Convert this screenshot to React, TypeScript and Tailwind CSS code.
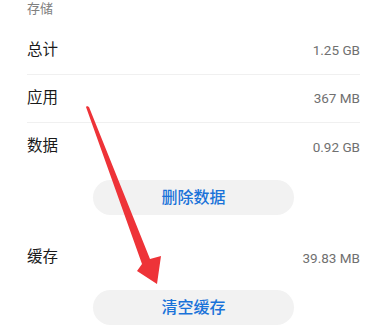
const rows = [
  { label: '总计', value: '1.25 GB' },
  { label: '应用', value: '367 MB' },
  { label: '数据', value: '0.92 GB' },
]

function Arrow() {
  return (
    <svg className="absolute left-0 top-0 pointer-events-none" width="384" height="335" viewBox="0 0 384 335">
      <polygon
        points="87,106 89,107 150,259 161,256 157,284 137,271 142,264 86,107"
        fill="#ee3338"
      />
    </svg>
  )
}

export default function App() {
  return (
    <div className="relative w-[384px] h-[335px] overflow-hidden bg-white font-['Roboto','Noto_Sans_CJK_SC',sans-serif]">
      <div className="pl-[27px] pr-[24px]">
        <div className="h-[27px] text-[13px] leading-[18px] text-[#808080]">存储</div>
        {rows.map((r, i) => (
          <div
            key={r.label}
            className={`flex items-center justify-between h-[48px] ${i < rows.length - 1 ? 'border-b border-[#f0f0f0]' : ''}`}
          >
            <span className="text-[15.5px] text-[#1a1a1a]">{r.label}</span>
            <span className="text-[13.5px] text-[#707070]">{r.value}</span>
          </div>
        ))}
        <button className="mt-[9px] mx-auto flex items-center justify-center w-[201px] h-[35px] rounded-full bg-[#f2f2f2] text-[16px] font-medium text-[#1a73d9]">
          删除数据
        </button>
        <div className="mt-[19px] flex items-center justify-between h-[48px]">
          <span className="text-[15.5px] text-[#1a1a1a]">缓存</span>
          <span className="text-[13.5px] text-[#707070]">39.83 MB</span>
        </div>
        <button className="mt-[8px] mx-auto flex items-center justify-center w-[201px] h-[35px] rounded-full bg-[#f2f2f2] text-[16px] font-medium text-[#1a73d9]">
          清空缓存
        </button>
      </div>
      <Arrow />
    </div>
  )
}
